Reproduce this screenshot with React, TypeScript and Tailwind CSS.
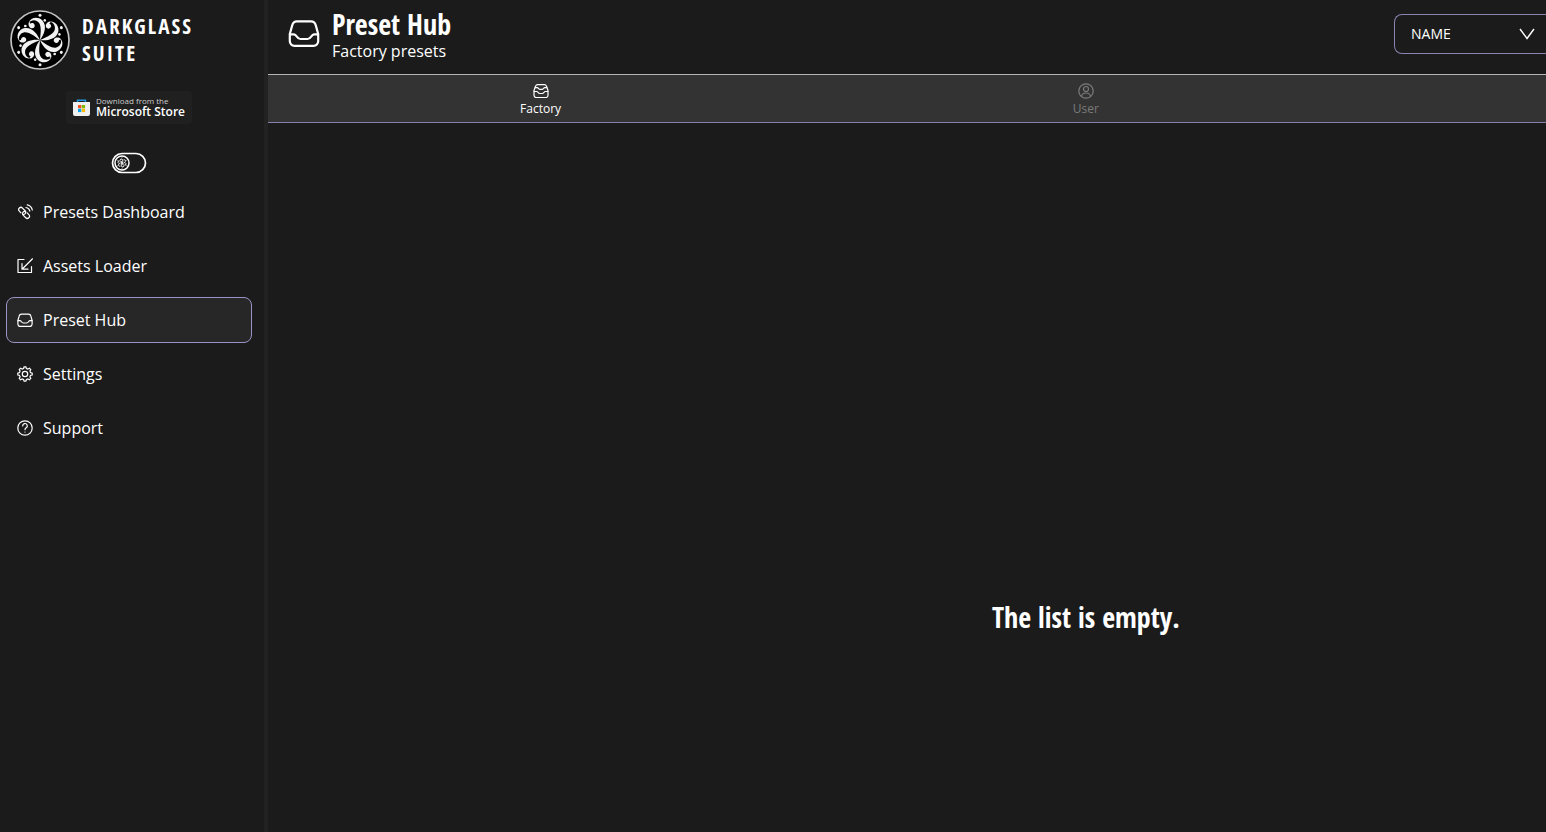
import React from "react";

const TITLE_FONT = "font-['Open_Sans_Condensed','Open_Sans',sans-serif]";
const ARMS = [0, 60, 120, 180, 240, 300];

function Emblem() {
  return (
    <svg viewBox="-90 -90 180 180" className="size-[60px] shrink-0" aria-hidden="true">
      <circle r="87" fill="#000" stroke="#c4c4c4" strokeWidth="5" />
      {ARMS.map((a) => (
        <g key={a} transform={`rotate(${a})`} fill="#f2f2f2">
          <path d="M0 0 C11 -14 24 -42 6 -60 C-6 -71 -28 -69 -34 -52 C-26 -62 -11 -62 -3 -52 C6 -38 1 -16 0 0Z" />
          <path d="M-34 -52 C-36 -44 -31 -35 -23 -35 A8 8 0 1 0 -29 -49 L-30 -54Z" />
          <circle cx="0" cy="-74" r="4.500" />
          <circle cx="-44" cy="-42" r="4" />
        </g>
      ))}
    </svg>
  );
}

function StoreBag() {
  return (
    <svg viewBox="0 0 17 18" className="h-[18px] w-[17px] shrink-0" aria-hidden="true">
      <path d="M4.500 4V1.200h8V4" fill="none" stroke="#2196e0" strokeWidth="1.400" />
      <path d="M0 3h17v12a2 2 0 0 1-2 2H2a2 2 0 0 1-2-2z" fill="#f0f0f0" />
      <path d="M5 6h3.300v3.300H5z" fill="#f25022" />
      <path d="M8.800 6h3.300v3.300H8.800z" fill="#7fba00" />
      <path d="M5 9.800h3.300v3.300H5z" fill="#00a4ef" />
      <path d="M8.800 9.800h3.300v3.300H8.800z" fill="#ffb900" />
    </svg>
  );
}

function Glyph({ size = "size-4", width = 1.2, children }: { size?: string; width?: number; children: React.ReactNode }) {
  return (
    <svg
      viewBox="0 0 16 16"
      className={`${size} shrink-0`}
      fill="none"
      stroke="currentColor"
      strokeWidth={width}
      strokeLinecap="round"
      strokeLinejoin="round"
      aria-hidden="true"
    >
      {children}
    </svg>
  );
}

const linkShapes = (
  <>
    <g transform="translate(7.100 8.900) rotate(46)">
      <path d="M-2.200 2.200H-4.600a2.200 2.200 0 0 1 0-4.400H-.9a2.200 2.200 0 0 1 2.200 2.200c0 .9-.4 1.500-1 1.900" />
      <path d="M2.200-2.200H4.600a2.200 2.200 0 0 1 0 4.400H.9a2.200 2.200 0 0 1-2.200-2.200c0-.9.400-1.500 1-1.900" />
    </g>
    <path d="M9 3.500a4.500 4.500 0 0 1 3.800 3.600M10.200.8a6.500 6.500 0 0 1 5.100 5.200" />
  </>
);
const loadShapes = (
  <>
    <path d="M7 1.500H1v13h13.500V8.500" />
    <path d="M15.500.8 5 11.200M5 5.500v5.700h6" />
  </>
);
const inboxShapes = (
  <>
    <path d="M.9 8.500 2.100 4.200Q2.600 2.200 4.500 2.200h7Q13.400 2.200 13.900 4.200L15.100 8.500v3.600a2.300 2.300 0 0 1-2.300 2.300H3.200A2.300 2.300 0 0 1 .9 12.100z" />
    <path d="M1 8.700H3c1.400 0 1.500 2.300 3.200 2.300h3.600c1.700 0 1.800-2.300 3.200-2.300h2" />
  </>
);
const gearShapes = (
  <>
    <circle cx="8" cy="8" r="2.700" />
    <path d="M6.600 2.500 7 .8h2l.4 1.700 1.500.6 1.500-.9 1.400 1.400-.9 1.500.6 1.500 1.700.4v2l-1.700.4-.6 1.500.9 1.500-1.400 1.400-1.500-.9-1.500.6-.4 1.700H7l-.4-1.700-1.500-.6-1.500.9-1.400-1.400.9-1.500-.6-1.500L.8 9V7l1.700-.4.6-1.500-.9-1.500 1.400-1.400 1.500.9z" />
  </>
);
const helpShapes = (
  <>
    <circle cx="8" cy="8" r="7.200" />
    <path d="M5.700 6A2.300 2.300 0 1 1 9.200 7.800c-.8.500-1.200.9-1.200 1.900M8 12v.1" />
  </>
);
const factoryShapes = (
  <>
    <path d="M1 7.500 2.500 3.300Q3 1.600 4.800 1.600h6.400Q13 1.600 13.500 3.300L15 7.500v4.700a2.300 2.300 0 0 1-2.300 2.300H3.300A2.300 2.300 0 0 1 1 12.200z" />
    <path d="M2.300 4.700h2c1 0 1.200 1.600 2.400 1.600h2.600c1.200 0 1.400-1.600 2.400-1.600h2M1.200 8.500h2.600c1 0 1.500 2 2.900 2h2.600c1.400 0 1.900-2 2.900-2h2.600" />
  </>
);
const userShapes = (
  <>
    <circle cx="8" cy="8" r="7.200" />
    <circle cx="8" cy="6" r="2.500" />
    <path d="M3.500 13.300c.3-2.200 2-3.300 4.500-3.300s4.200 1.100 4.500 3.300" />
  </>
);

const NAV = [
  { label: "Presets Dashboard", icon: linkShapes },
  { label: "Assets Loader", icon: loadShapes },
  { label: "Preset Hub", icon: inboxShapes, active: true },
  { label: "Settings", icon: gearShapes },
  { label: "Support", icon: helpShapes },
];

function ThemeSwitch() {
  return (
    <button type="button" role="switch" aria-checked="false" aria-label="Theme" className="mt-7 block self-center">
      <svg viewBox="0 0 36 22" className="h-[22px] w-9" fill="none" stroke="#fff" aria-hidden="true">
        <rect x="1.500" y="1.500" width="33" height="19" rx="9.500" strokeWidth="1.700" />
        <circle cx="11" cy="11" r="7" strokeWidth="1.500" fill="#111" />
        {ARMS.map((a) => (
          <g key={a} transform={`translate(11 11) rotate(${a})`}>
            <path d="M0 0Q2-2 0-4Q-1.500-4.500-2-3" strokeWidth=".9" />
            <circle cx="0" cy="-5.300" r=".3" strokeWidth=".4" />
          </g>
        ))}
      </svg>
    </button>
  );
}

export default function App() {
  return (
    <div className="flex h-screen overflow-hidden bg-[#1b1b1b] font-['Open_Sans',sans-serif] text-white">
      <aside className="flex w-67 shrink-0 flex-col border-r-4 border-[#222222]">
        <div className="flex items-center gap-3 px-2.5 pt-2.5">
          <Emblem />
          <h2 className={`${TITLE_FONT} w-32 text-[21px] leading-[27px] font-bold tracking-widest`}>DARKGLASS SUITE</h2>
        </div>
        <div className="flex flex-col pr-1.5">
          <a href="#store" className="mt-[21px] flex h-[33px] items-center gap-1.5 self-center rounded-sm bg-[#202020] px-[7px]">
            <StoreBag />
            <span className="flex flex-col">
              <span className="text-[8px] leading-[9px] text-[#cccccc]">Download from the</span>
              <span className="text-xs leading-[14px] font-semibold">Microsoft Store</span>
            </span>
          </a>
          <ThemeSwitch />
        </div>
        <nav className="mt-[15px] flex flex-col gap-2 pr-3 pl-1.5">
          {NAV.map((item) => (
            <a
              key={item.label}
              href="#nav"
              className={`flex h-[46px] items-center gap-2.5 rounded-lg border px-2.5 text-base ${
                item.active ? "border-[#9c93c4] bg-[#272727]" : "border-transparent"
              }`}
            >
              <Glyph>{item.icon}</Glyph>
              {item.label}
            </a>
          ))}
        </nav>
      </aside>
      <main className="flex min-w-0 flex-1 flex-col overflow-hidden">
        <header className="flex h-[74px] items-start justify-between pl-5">
          <div className="flex items-center gap-3 pt-1.5">
            <Glyph size="size-8" width={1.1}>{inboxShapes}</Glyph>
            <div>
              <h1 className={`${TITLE_FONT} text-[28px] leading-9 font-bold`}>Preset Hub</h1>
              <p className="text-base leading-[18px]">Factory presets</p>
            </div>
          </div>
          <div className="relative mt-3.5">
            <select
              aria-label="Sort by"
              className="h-10 w-38 appearance-none rounded-l-lg border border-r-0 border-[#8a83b0] bg-transparent pl-4 text-sm"
            >
              <option>NAME</option>
            </select>
            <svg
              viewBox="0 0 16 12"
              className="pointer-events-none absolute top-3.5 right-[11px] h-3 w-4"
              fill="none"
              stroke="#fff"
              strokeWidth="1.400"
              aria-hidden="true"
            >
              <path d="M1 1l7 9.500L15 1" />
            </svg>
          </div>
        </header>
        <div className="grid h-[49px] w-[128%] shrink-0 grid-cols-3 border-t border-b border-t-[#b5b5b5] border-b-[#8680ac] bg-[#333333]">
          <button type="button" className="flex flex-col items-center pt-2 text-xs leading-5">
            <Glyph>{factoryShapes}</Glyph>
            Factory
          </button>
          <button type="button" className="flex flex-col items-center pt-2 text-xs leading-5 text-[#7b7b7b]">
            <Glyph>{userShapes}</Glyph>
            User
          </button>
        </div>
        <section className="flex w-[128%] flex-1 items-center justify-center pt-[278px]">
          <p className={`${TITLE_FONT} text-[28px] leading-9 font-bold`}>The list is empty.</p>
        </section>
      </main>
    </div>
  );
}
